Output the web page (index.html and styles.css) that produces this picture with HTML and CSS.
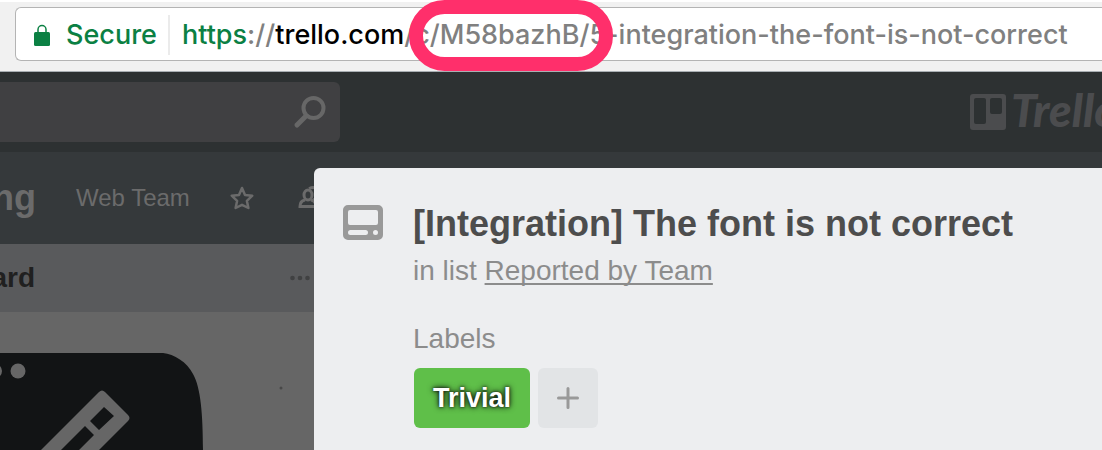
FILE: index.html
```
<!DOCTYPE html>
<html lang="en">
<head>
<meta charset="utf-8">
<title>[Integration] The font is not correct</title>
<link rel="stylesheet" href="styles.css">
</head>
<body>
<header class="browser">
  <div class="omnibox">
    <svg class="lock" viewBox="0 0 16 22" aria-hidden="true"><path d="M4 9V5.500a4 4 0 0 1 8 0V9" fill="none" stroke="#0b8043" stroke-width="1.500"/><rect y="8" width="16" height="14" rx="1.500" fill="#0b8043"/></svg>
    <span class="secure">Secure</span>
    <div class="url"><span class="scheme">https</span>://<span class="host">trello.com</span>/c/M58bazhB/5-integration-the-font-is-not-correct</div>
  </div>
  <div class="ring"></div>
</header>
<div class="app">
  <div class="topbar">
    <form class="search">
      <input class="search-input" type="text" aria-label="Search">
      <button class="icon-button" type="button" aria-label="Submit search">
        <svg class="search-icon" viewBox="0 0 32 32"><g fill="none" stroke="#676767" stroke-linecap="round"><circle cx="19.500" cy="12" r="10" stroke-width="4"/><path d="M12 20L3 29" stroke-width="5"/></g></svg>
      </button>
    </form>
    <a class="logo" href="#" aria-label="Trello home">
      <svg class="logo-mark" viewBox="0 0 36 36"><path fill="#4b4c4e" fill-rule="evenodd" d="M3 0H33a3 3 0 0 1 3 3V33a3 3 0 0 1-3 3H3a3 3 0 0 1-3-3V3a3 3 0 0 1 3-3zM6 4a2 2 0 0 0-2 2V28a2 2 0 0 0 2 2h8a2 2 0 0 0 2-2V6a2 2 0 0 0-2-2zM22 4a2 2 0 0 0-2 2V18a2 2 0 0 0 2 2h8a2 2 0 0 0 2-2V6a2 2 0 0 0-2-2z"/></svg>
      <span class="logo-text">Trello</span>
    </a>
  </div>
  <nav class="board-bar">
    <h1 class="board-name"><span>ng</span></h1>
    <a class="team" href="#">Web Team</a>
    <button class="icon-button" type="button" aria-label="Star board">
      <svg class="star" viewBox="0 0 24 24"><path d="M12 2l3 7 7.300.7-5.400 5.200 1.500 7.100L12 18.800 5.600 22l1.500-7.100L1.700 9.700 9 9z" fill="none" stroke="#6b6b6b" stroke-width="2.500" stroke-linejoin="round"/></svg>
    </button>
    <button class="icon-button people-button" type="button" aria-label="Visibility">
      <svg class="people" viewBox="0 0 30 24"><g fill="none" stroke="#6b6b6b" stroke-width="3"><ellipse cx="10" cy="9" rx="4" ry="5"/><path d="M7 14Q2 15 2 20.500H18Q18 15 13 14"/><path d="M11 2.500Q19-1 20 7q0 4-3 6 7 1 8 7"/></g></svg>
    </button>
  </nav>
  <main class="list">
    <div class="list-head">
      <h2 class="list-name"><span>ard</span></h2>
      <button class="icon-button" type="button" aria-label="List actions">
        <svg class="dots" viewBox="0 0 20 6" fill="#404142"><circle cx="2.500" cy="3" r="2.300"/><circle cx="10" cy="3" r="2.300"/><circle cx="17.500" cy="3" r="2.300"/></svg>
      </button>
    </div>
    <svg class="cover" viewBox="0 0 314 138" aria-hidden="true">
      <path d="M-2 41H163C174 42 187 50 193 62C201 76 203 104 203 140H-2z" fill="#121415"/>
      <g fill="#666"><circle cx="18" cy="59" r="7.500"/><circle cx="-5.500" cy="59" r="7.500"/>
      <path d="M39 140L99 80Q102 77 105 80L128 103Q131 106 128 109L97 140z"/></g>
      <path d="M104 95L114 104 99 118 90 109zM85 114L94 123 77 140H59z" fill="#121415"/>
      <circle cx="281" cy="76" r="1.500" fill="#484848"/>
    </svg>
  </main>
</div>
<section class="card-window" role="dialog" aria-labelledby="card-title">
  <svg class="card-icon" viewBox="0 0 40 35" aria-hidden="true"><path fill="#999" fill-rule="evenodd" d="M5 0H35a5 5 0 0 1 5 5V30a5 5 0 0 1-5 5H5a5 5 0 0 1-5-5V5a5 5 0 0 1 5-5zM7 5a2 2 0 0 0-2 2V18a2 2 0 0 0 2 2H33a2 2 0 0 0 2-2V7a2 2 0 0 0-2-2zM7.500 25a2.500 2.500 0 0 0 0 5h15a2.500 2.500 0 0 0 0-5zM32.500 25a2.500 2.500 0 0 0 0 5 2.500 2.500 0 0 0 0-5z"/></svg>
  <div class="card-body">
    <h2 class="card-title" id="card-title">[Integration] The font is not correct</h2>
    <p class="in-list">in list <a href="#">Reported by Team</a></p>
    <h3 class="labels-title">Labels</h3>
    <div class="labels">
      <button class="label" type="button">Trivial</button>
      <button class="add" type="button" aria-label="Add label"><svg class="plus" viewBox="0 0 22 22"><path d="M11 1.500V20.500M1.500 11H20.500" stroke="#999" stroke-width="3" stroke-linecap="round"/></svg></button>
    </div>
  </div>
</section>
</body>
</html>
```
FILE: styles.css
```
* { box-sizing: border-box; }
body {
  position: relative;
  display: flex;
  flex-direction: column;
  min-height: 100vh;
  margin: 0;
  overflow: hidden;
  background: #35393b;
  font-family: "Liberation Sans", Arial, sans-serif;
}
h1, h2, h3, p { margin: 0; }
svg { display: block; flex: none; overflow: visible; }
button { padding: 0; border: 0; font: inherit; }
.icon-button { background: none; }

.browser {
  position: relative;
  padding: 5px 0 10px 15px;
  border-top: 2px solid #fff;
  border-bottom: 1px solid #a9afb3;
  background: #f1f1f1;
}
.omnibox {
  display: flex;
  align-items: center;
  height: 54px;
  padding: 2px 0 0 18px;
  border: 1px solid #b4b4b4;
  border-right: 0;
  border-radius: 6px 0 0 6px;
  background: #fff;
  color: #808080;
  font-family: Inter, sans-serif;
  font-size: 27px;
  font-weight: 500;
  line-height: 40px;
  white-space: nowrap;
}
.lock { width: 16px; height: 22px; }
.secure {
  width: 120px;
  padding-left: 16px;
  border-right: 2px solid #ebebeb;
  color: #0b8043;
}
.url { padding-left: 12px; }
.scheme { color: #0b8043; }
.host { color: #000; }
.ring {
  position: absolute;
  top: -2px;
  left: 409px;
  width: 204px;
  height: 71px;
  border: 14px solid #ff2f6b;
  border-radius: 36px;
}

.app { display: flex; flex: 1; flex-direction: column; }
.topbar {
  display: flex;
  justify-content: space-between;
  align-items: center;
  height: 80px;
  background: #2d3132;
}
.search {
  display: flex;
  align-items: center;
  width: 340px;
  height: 60px;
  padding-right: 14px;
  border-radius: 0 6px 6px 0;
  background: #404042;
}
.search-input {
  flex: 1;
  min-width: 0;
  border: 0;
  outline: 0;
  background: none;
  color: #999;
  font-size: 28px;
}
.search-icon { width: 32px; height: 32px; }
.logo {
  display: flex;
  align-items: center;
  gap: 5px;
  width: 132px;
  overflow: hidden;
  color: #4b4c4e;
  text-decoration: none;
}
.logo-mark { width: 36px; height: 36px; }
.logo-text {
  padding-bottom: 4px;
  font: italic 900 46px/48px Lato, sans-serif;
}
.board-bar {
  display: flex;
  align-items: center;
  height: 92px;
  background: #35393b;
  color: #6b6b6b;
}
.board-name {
  display: flex;
  justify-content: flex-end;
  width: 36px;
  overflow: hidden;
  font-size: 36px;
  line-height: 44px;
}
.team {
  margin: 0 40px;
  color: inherit;
  font-size: 24px;
  text-decoration: none;
}
.star { width: 24px; height: 24px; }
.people-button { margin-left: 44px; }
.people { width: 30px; height: 24px; }
.list { flex: 1; width: 314px; background: #666; }
.list-head {
  display: flex;
  align-items: center;
  justify-content: space-between;
  height: 68px;
  padding-right: 4px;
  background: #595a5c;
}
.list-name {
  display: flex;
  justify-content: flex-end;
  width: 35px;
  overflow: hidden;
  color: #202020;
  font-size: 28px;
  line-height: 36px;
}
.dots { width: 20px; height: 6px; }
.cover { width: 314px; height: 138px; overflow: hidden; }

.card-window {
  position: absolute;
  top: 168px;
  right: 0;
  bottom: 0;
  left: 314px;
  display: flex;
  align-items: flex-start;
  gap: 30px;
  padding: 34px 0 0 29px;
  border-radius: 6px 0 0 0;
  background: #edeef0;
}
.card-icon { width: 40px; height: 35px; margin-top: 3px; }
.card-title {
  color: #4d4d4d;
  font-size: 36px;
  line-height: 44px;
  white-space: nowrap;
}
.in-list {
  margin-top: 7px;
  color: #8c8c8c;
  font-size: 28px;
  line-height: 36px;
}
.in-list a {
  color: inherit;
  text-decoration-thickness: 2px;
  text-underline-offset: 3px;
  text-decoration-skip-ink: none;
}
.labels-title {
  margin-top: 32px;
  color: #8c8c8c;
  font-size: 28px;
  font-weight: 400;
  line-height: 36px;
}
.labels { display: flex; gap: 8px; margin-top: 11px; padding-left: 1px; }
.label {
  height: 60px;
  padding: 0 19px;
  border-radius: 6px;
  background: #5fbf49;
  color: #fff;
  font-size: 27px;
  font-weight: 700;
  text-shadow: 0 0 6px #000, 0 0 3px #222;
}
.add {
  display: grid;
  place-items: center;
  width: 60px;
  height: 60px;
  border-radius: 6px;
  background: #e2e4e6;
}
.plus { width: 22px; height: 22px; }
```
